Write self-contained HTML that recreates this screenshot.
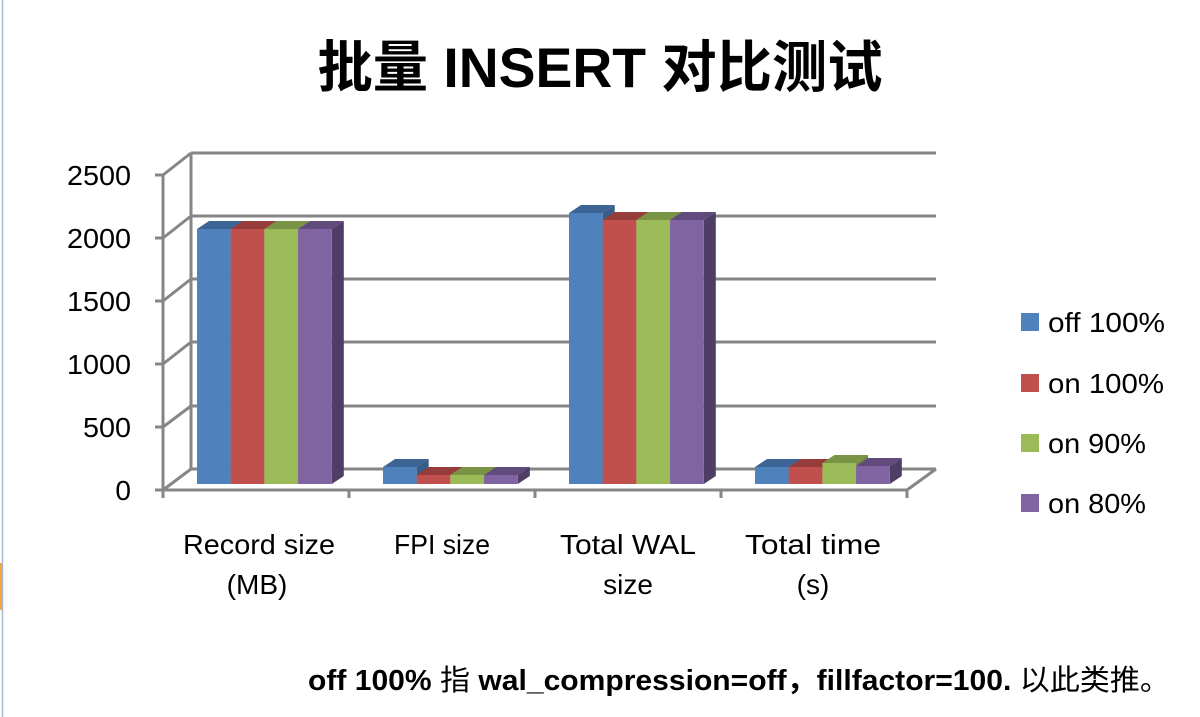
<!DOCTYPE html>
<html><head><meta charset="utf-8"><style>
html,body{margin:0;padding:0;background:#fff;width:1200px;height:717px;overflow:hidden}
svg{display:block}
text{font-family:"Liberation Sans","Noto Sans CJK SC",sans-serif;fill:#000}
</style></head><body>
<svg width="1200" height="717" viewBox="0 0 1200 717" xmlns="http://www.w3.org/2000/svg">
<rect x="0" y="0" width="1200" height="717" fill="#fff"/>
<line x1="2.5" y1="0" x2="2.5" y2="717" stroke="#a9b7cc" stroke-width="1.5"/>
<rect x="0" y="563" width="2" height="47" fill="#f2a540"/>

<text x="600" y="87" font-size="56" font-weight="bold" text-anchor="middle" textLength="565" lengthAdjust="spacingAndGlyphs">批量 INSERT 对比测试</text>

<g stroke="#868686" stroke-width="3" fill="none">
  <line x1="191" y1="153" x2="936" y2="153"/>
  <line x1="191" y1="216" x2="936" y2="216"/>
  <line x1="191" y1="279" x2="936" y2="279"/>
  <line x1="191" y1="342" x2="936" y2="342"/>
  <line x1="191" y1="406" x2="936" y2="406"/>
  <line x1="191" y1="469" x2="936" y2="469"/>
  <line x1="191" y1="153" x2="191" y2="469"/>
  <line x1="163" y1="175" x2="191" y2="153"/>
  <line x1="163" y1="238" x2="191" y2="216"/>
  <line x1="163" y1="301" x2="191" y2="279"/>
  <line x1="163" y1="364" x2="191" y2="342"/>
  <line x1="163" y1="427" x2="191" y2="406"/>
  <line x1="163" y1="490" x2="191" y2="469"/>
  <line x1="163" y1="175" x2="163" y2="490"/>
  <line x1="163" y1="490" x2="907" y2="490"/>
  <line x1="907" y1="490" x2="936" y2="469"/>
  <line x1="155" y1="175" x2="163" y2="175"/>
  <line x1="155" y1="238" x2="163" y2="238"/>
  <line x1="155" y1="301" x2="163" y2="301"/>
  <line x1="155" y1="364" x2="163" y2="364"/>
  <line x1="155" y1="427" x2="163" y2="427"/>
  <line x1="155" y1="490" x2="163" y2="490"/>
  <line x1="163" y1="490" x2="163" y2="498"/>
  <line x1="349" y1="490" x2="349" y2="498"/>
  <line x1="535" y1="490" x2="535" y2="498"/>
  <line x1="721" y1="490" x2="721" y2="498"/>
  <line x1="907" y1="490" x2="907" y2="498"/>
</g>

<g id="bars"></g>

<g font-size="28">
  <text x="131" y="185" text-anchor="end" textLength="64" lengthAdjust="spacingAndGlyphs">2500</text>
  <text x="131" y="248" text-anchor="end" textLength="64" lengthAdjust="spacingAndGlyphs">2000</text>
  <text x="131" y="311" text-anchor="end" textLength="64" lengthAdjust="spacingAndGlyphs">1500</text>
  <text x="131" y="374" text-anchor="end" textLength="64" lengthAdjust="spacingAndGlyphs">1000</text>
  <text x="131" y="437" text-anchor="end" textLength="48" lengthAdjust="spacingAndGlyphs">500</text>
  <text x="131" y="500" text-anchor="end">0</text>
</g>
<g font-size="28">
  <text x="259" y="554" text-anchor="middle" textLength="152" lengthAdjust="spacingAndGlyphs">Record size</text>
  <text x="257" y="594" text-anchor="middle">(MB)</text>
  <text x="442" y="554" text-anchor="middle" textLength="96" lengthAdjust="spacingAndGlyphs">FPI size</text>
  <text x="628" y="554" text-anchor="middle" textLength="136" lengthAdjust="spacingAndGlyphs">Total WAL</text>
  <text x="628" y="594" text-anchor="middle">size</text>
  <text x="813" y="554" text-anchor="middle" textLength="136" lengthAdjust="spacingAndGlyphs">Total time</text>
  <text x="813" y="594" text-anchor="middle">(s)</text>
  <rect x="1021" y="313" width="18" height="18" fill="#4f81bd"/>
  <rect x="1021" y="374" width="18" height="18" fill="#c0504d"/>
  <rect x="1021" y="434" width="18" height="18" fill="#9bbb59"/>
  <rect x="1021" y="494" width="18" height="18" fill="#8064a2"/>
  <text x="1048" y="332" textLength="117" lengthAdjust="spacingAndGlyphs">off 100%</text>
  <text x="1048" y="393" textLength="116" lengthAdjust="spacingAndGlyphs">on 100%</text>
  <text x="1048" y="453" textLength="98" lengthAdjust="spacingAndGlyphs">on 90%</text>
  <text x="1048" y="513" textLength="98" lengthAdjust="spacingAndGlyphs">on 80%</text>
</g>

<text x="308" y="690" font-size="29" font-weight="bold" textLength="862" lengthAdjust="spacingAndGlyphs">off 100% <tspan font-weight="normal">指</tspan> wal_compression=off，fillfactor=100. <tspan font-weight="normal">以此类推。</tspan></text>
</svg>
<script>
(function(){
var g=document.getElementById('bars');
var cols=[["#4f81bd","#3c6494","#385d8a"],["#c0504d","#963c3a","#8c3836"],["#9bbb59","#7a9446","#71893f"],["#8064a2","#614b7c","#4f3d66"]];
var groups=[[197,[229,229,229,229]],[383,[467,475,475,475]],[569,[213,220,220,220]],[755,[467,467,463,466]]];
var dx=12,dy=8,w=33.7,bot=484,ns='http://www.w3.org/2000/svg';
function poly(p,f){var e=document.createElementNS(ns,'polygon');e.setAttribute('points',p);e.setAttribute('fill',f);g.appendChild(e);}
groups.forEach(function(gr){
 for(var i=0;i<4;i++){
  var x=gr[0]+i*w,t=gr[1][i],c=cols[i];
  poly(x+','+t+' '+(x+w)+','+t+' '+(x+w+dx)+','+(t-dy)+' '+(x+dx)+','+(t-dy),c[1]);
  poly((x+w)+','+t+' '+(x+w+dx)+','+(t-dy)+' '+(x+w+dx)+','+(bot-dy)+' '+(x+w)+','+bot,c[2]);
  poly(x+','+t+' '+(x+w)+','+t+' '+(x+w)+','+bot+' '+x+','+bot,c[0]);
 }
});
})();
</script>
</body></html>
